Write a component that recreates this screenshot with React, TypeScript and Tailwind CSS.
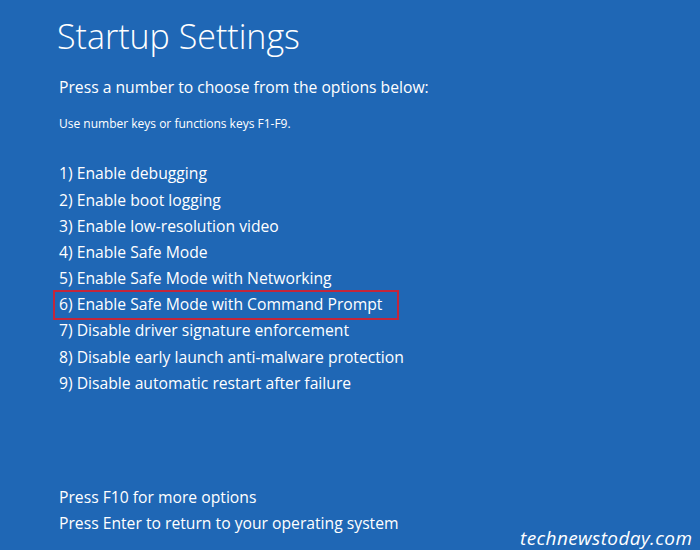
import React from 'react'

const options = [
  '1) Enable debugging',
  '2) Enable boot logging',
  '3) Enable low-resolution video',
  '4) Enable Safe Mode',
  '5) Enable Safe Mode with Networking',
  '6) Enable Safe Mode with Command Prompt',
  '7) Disable driver signature enforcement',
  '8) Disable early launch anti-malware protection',
  '9) Disable automatic restart after failure',
]

export default function App() {
  return (
    <div
      className="relative w-[700px] h-[550px] bg-[#1f67b5] text-white overflow-hidden flex flex-col pl-[59px] pt-[14px]"
      style={{ fontFamily: '"Open Sans", "Noto Sans", sans-serif' }}
    >
      <h1 className="text-[34px] font-light leading-[44px] -ml-[2px]">Startup Settings</h1>

      <p className="mt-[18px] text-[15.7px] leading-[22px]">Press a number to choose from the options below:</p>
      <p className="mt-[18px] text-[12px] leading-[16px]">Use number keys or functions keys F1-F9.</p>

      <ul className="mt-[29px] flex flex-col text-[15.7px]">
        {options.map((o, i) => (
          <li key={o} className="h-[26.2px] flex items-center whitespace-nowrap">
            {i === 5 ? (
              <span className="-ml-[6px] pl-[4px] h-[30px] w-[346px] flex items-center border-2 border-[#c4263a]">
                {o}
              </span>
            ) : (
              <span>{o}</span>
            )}
          </li>
        ))}
      </ul>

      <div className="mt-auto pb-[14px] flex flex-col text-[15.7px]">
        <span className="leading-[26px]">Press F10 for more options</span>
        <span className="leading-[26px]">Press Enter to return to your operating system</span>
      </div>

      <span className="absolute left-[520px] top-[528px] italic text-[19px] leading-[20px] tracking-[0.4px] whitespace-nowrap">
        technewstoday.com
      </span>
    </div>
  )
}
